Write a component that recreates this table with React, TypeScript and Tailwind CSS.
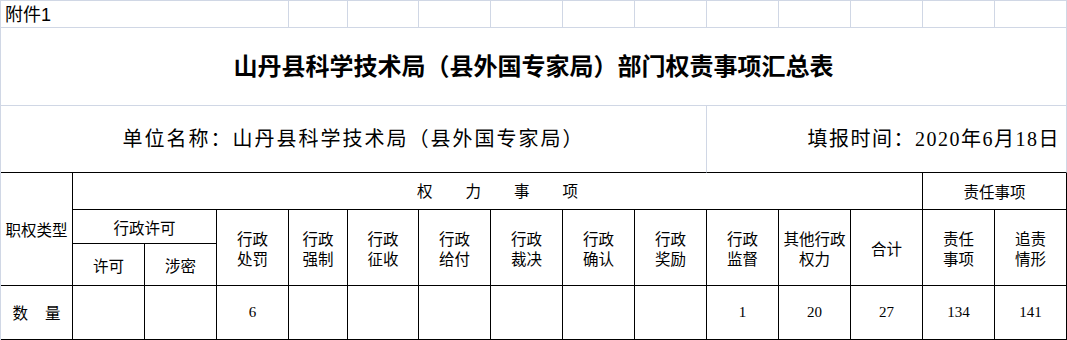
import React from "react";

const GRAY = "border-r border-b border-[#d0d7e5]";
const BLACK = "border-r border-b border-black";
const CENTER = "flex items-center justify-center text-center";
const CJK = "font-['Noto_Sans_CJK_SC','Noto_Sans_CJK_JP',sans-serif]";
const HEAD = `${BLACK} ${CENTER} ${CJK} text-[15.5px] leading-[20px] text-black`;
const NUM = `${BLACK} ${CENTER} font-['Liberation_Serif',serif] text-[15px] text-black`;

export default function App() {
  return (
    <div className="w-[1067px] h-[340px] bg-white overflow-hidden">
      <div className="grid grid-cols-[72px_72px_72px_72px_59px_71px_72px_72px_72px_72px_72px_72px_72px_72px_72px] grid-rows-[27px_78px_67px_37px_34px_42px_54px] border-l border-t border-[#d0d7e5] w-[1067px]">
        {/* Row 1 */}
        <div className={`col-start-1 col-span-4 row-start-1 ${GRAY} flex items-end pl-[4px] pb-[1px] font-['Liberation_Sans','Noto_Sans_CJK_SC',sans-serif] text-[18px] leading-[22px] text-black`}>
          附件1
        </div>
        <div className={`col-start-5 row-start-1 ${GRAY}`} />
        <div className={`col-start-6 row-start-1 ${GRAY}`} />
        <div className={`col-start-7 row-start-1 ${GRAY}`} />
        <div className={`col-start-8 row-start-1 ${GRAY}`} />
        <div className={`col-start-9 row-start-1 ${GRAY}`} />
        <div className={`col-start-10 row-start-1 ${GRAY}`} />
        <div className={`col-start-11 row-start-1 ${GRAY}`} />
        <div className={`col-start-12 row-start-1 ${GRAY}`} />
        <div className={`col-start-13 row-start-1 ${GRAY}`} />
        <div className={`col-start-14 row-start-1 ${GRAY}`} />
        <div className={`col-start-15 row-start-1 ${GRAY}`} />

        {/* Row 2: title */}
        <div className={`col-start-1 col-span-15 row-start-2 ${GRAY} ${CENTER} font-['Liberation_Serif','Noto_Sans_CJK_SC',serif] font-bold text-[24px] text-black`}>
          山丹县科学技术局（县外国专家局）部门权责事项汇总表
        </div>

        {/* Row 3 */}
        <div className={`col-start-1 col-span-10 row-start-3 border-r border-b border-r-[#d0d7e5] border-b-black ${CENTER} font-['Liberation_Serif','Noto_Sans_CJK_SC',serif] text-[20px] tracking-[2px] text-black`}>
          单位名称：山丹县科学技术局（县外国专家局）
        </div>
        <div className={`col-start-11 col-span-5 row-start-3 border-r border-b border-r-[#d0d7e5] border-b-black flex items-center justify-end pr-[6px] font-['Liberation_Serif','Noto_Sans_CJK_SC',serif] text-[20px] tracking-[1.5px] text-black`}>
          填报时间：2020年6月18日
        </div>

        {/* Row 4 */}
        <div className={`col-start-1 row-start-4 row-span-3 ${HEAD}`}>职权类型</div>
        <div className={`col-start-2 col-span-12 row-start-4 ${BLACK} flex items-center justify-center gap-[33px] ${CJK} text-[15.5px] text-black`}>
          <span>权</span>
          <span>力</span>
          <span>事</span>
          <span>项</span>
        </div>
        <div className={`col-start-14 col-span-2 row-start-4 ${HEAD}`}>责任事项</div>

        {/* Row 5 */}
        <div className={`col-start-2 col-span-2 row-start-5 ${HEAD}`}>行政许可</div>
        <div className={`col-start-4 row-start-5 row-span-2 ${HEAD}`}>行政<br />处罚</div>
        <div className={`col-start-5 row-start-5 row-span-2 ${HEAD}`}>行政<br />强制</div>
        <div className={`col-start-6 row-start-5 row-span-2 ${HEAD}`}>行政<br />征收</div>
        <div className={`col-start-7 row-start-5 row-span-2 ${HEAD}`}>行政<br />给付</div>
        <div className={`col-start-8 row-start-5 row-span-2 ${HEAD}`}>行政<br />裁决</div>
        <div className={`col-start-9 row-start-5 row-span-2 ${HEAD}`}>行政<br />确认</div>
        <div className={`col-start-10 row-start-5 row-span-2 ${HEAD}`}>行政<br />奖励</div>
        <div className={`col-start-11 row-start-5 row-span-2 ${HEAD}`}>行政<br />监督</div>
        <div className={`col-start-12 row-start-5 row-span-2 ${HEAD}`}>其他行政<br />权力</div>
        <div className={`col-start-13 row-start-5 row-span-2 ${HEAD}`}>合计</div>
        <div className={`col-start-14 row-start-5 row-span-2 ${HEAD}`}>责任<br />事项</div>
        <div className={`col-start-15 row-start-5 row-span-2 ${HEAD}`}>追责<br />情形</div>

        {/* Row 6 */}
        <div className={`col-start-2 row-start-6 ${HEAD}`}>许可</div>
        <div className={`col-start-3 row-start-6 ${HEAD}`}>涉密</div>

        {/* Row 7 */}
        <div className={`col-start-1 row-start-7 ${BLACK} flex items-center justify-center gap-[17px] ${CJK} text-[15.5px] text-black`}>
          <span>数</span>
          <span>量</span>
        </div>
        <div className={`col-start-2 row-start-7 ${NUM}`} />
        <div className={`col-start-3 row-start-7 ${NUM}`} />
        <div className={`col-start-4 row-start-7 ${NUM}`}>6</div>
        <div className={`col-start-5 row-start-7 ${NUM}`} />
        <div className={`col-start-6 row-start-7 ${NUM}`} />
        <div className={`col-start-7 row-start-7 ${NUM}`} />
        <div className={`col-start-8 row-start-7 ${NUM}`} />
        <div className={`col-start-9 row-start-7 ${NUM}`} />
        <div className={`col-start-10 row-start-7 ${NUM}`} />
        <div className={`col-start-11 row-start-7 ${NUM}`}>1</div>
        <div className={`col-start-12 row-start-7 ${NUM}`}>20</div>
        <div className={`col-start-13 row-start-7 ${NUM}`}>27</div>
        <div className={`col-start-14 row-start-7 ${NUM}`}>134</div>
        <div className={`col-start-15 row-start-7 ${NUM}`}>141</div>
      </div>
    </div>
  );
}
